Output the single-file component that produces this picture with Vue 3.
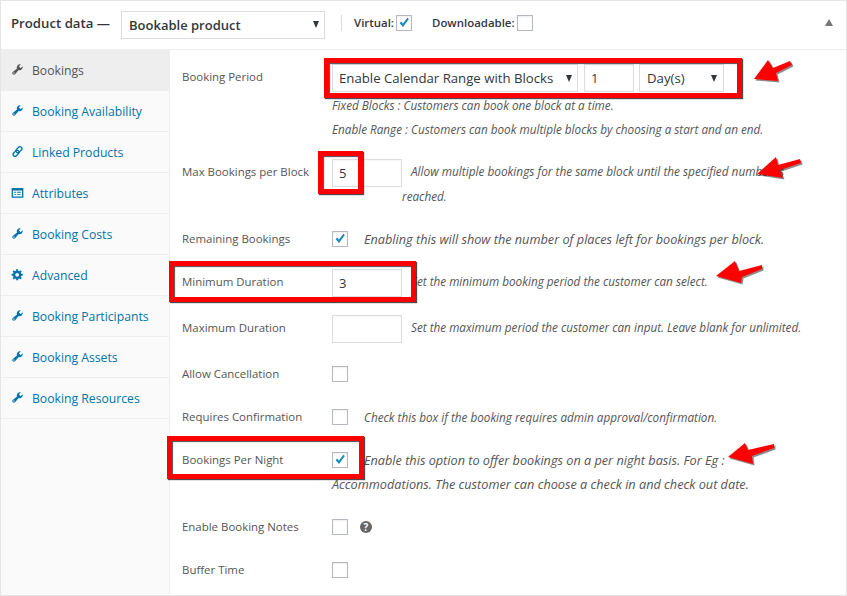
<script setup>
const wrench = 'M16.68 9.77c-1.34 1.34-3.3 1.67-4.95.99l-5.41 6.52c-.99.99-2.59.99-3.58 0s-.99-2.59 0-3.57l6.52-5.42c-.68-1.65-.35-3.61.99-4.95 1.28-1.28 3.12-1.62 4.72-1.06l-2.89 2.89 2.82 2.82 2.86-2.87c.53 1.58.18 3.39-1.08 4.67zM3.81 16.21c.4.39 1.04.39 1.43 0 .4-.4.4-1.04 0-1.43-.39-.4-1.03-.4-1.43 0-.39.39-.39 1.03 0 1.43z'
const gear = 'M18 12h-2.18c-.17.7-.44 1.35-.81 1.93l1.54 1.54-2.1 2.1-1.54-1.54c-.58.36-1.23.63-1.91.79V19H8v-2.18c-.68-.16-1.33-.43-1.91-.79l-1.54 1.54-2.12-2.12 1.54-1.54c-.36-.58-.63-1.23-.79-1.91H1V9.03h2.17c.16-.7.44-1.35.8-1.94L2.43 5.55l2.1-2.1 1.54 1.54c.58-.37 1.24-.64 1.93-.81V2h3v2.18c.68.16 1.33.43 1.91.79l1.54-1.54 2.12 2.12-1.54 1.54c.36.59.64 1.24.8 1.94H18V12zm-8.5 1.5c1.66 0 3-1.34 3-3s-1.34-3-3-3-3 1.34-3 3 1.34 3 3 3z'
const tabs = [
  { label: 'Bookings', icon: 'wrench', active: true },
  { label: 'Booking Availability', icon: 'wrench' },
  { label: 'Linked Products', icon: 'link' },
  { label: 'Attributes', icon: 'table' },
  { label: 'Booking Costs', icon: 'wrench' },
  { label: 'Advanced', icon: 'gear' },
  { label: 'Booking Participants', icon: 'wrench' },
  { label: 'Booking Assets', icon: 'wrench' },
  { label: 'Booking Resources', icon: 'wrench' },
]
const arrow = (x, y, p) => p.map(([a, b]) => `${x + a},${y + b}`).join(' ')
const arrows = [
  arrow(754, 79, [[0, 0], [14, -19], [19, -11], [36, -18], [38, -14], [22, -6], [24, 2]]),
  arrow(757, 174, [[0, 0], [19, -17], [21, -9], [43, -15], [44, -11], [23, -4], [26, 4]]),
  arrow(716, 276, [[0, 0], [19, -15], [23, -5], [46, -11], [46, -7], [26, 1], [25, 7]]),
  arrow(728, 457, [[0, 0], [17, -14], [20, -7], [46, -13], [46, -9], [24, -1], [25, 7]]),
]
const marks = [
  { key: 'period', cls: 'mark-period' },
  { key: 'max', cls: 'mark-max' },
  { key: 'min', cls: 'mark-min' },
  { key: 'night', cls: 'mark-night' },
]
</script>

<template>
  <div class="page">
    <header class="head">
      <strong class="title">Product data —</strong>
      <div class="select type-select"><span>Bookable product</span><i class="caret"></i></div>
      <span class="sep"></span>
      <span class="opt">Virtual:</span>
      <span class="box">
        <svg viewBox="0 0 16 16" class="tick"><path d="M3 8.2l1.8-1.8 2 2.2 5-6.6 1.8 1.5-6.7 9z" /></svg>
      </span>
      <span class="opt opt-dl">Downloadable:</span>
      <span class="box"></span>
      <i class="collapse"></i>
    </header>

    <div class="body">
      <nav class="tabs">
        <a v-for="t in tabs" :key="t.label" class="tab" :class="{ active: t.active }">
          <svg class="tab-icon" viewBox="0 0 20 20">
            <path v-if="t.icon === 'wrench'" :d="wrench" />
            <path v-else-if="t.icon === 'gear'" :d="gear" />
            <g v-else-if="t.icon === 'link'" class="link-icon">
              <rect x="9.2" y="2" width="6" height="10.5" rx="3" transform="rotate(45 12.2 7.2)" />
              <rect x="4.8" y="7.5" width="6" height="10.5" rx="3" transform="rotate(45 7.8 12.8)" />
            </g>
            <path v-else fill-rule="evenodd" d="M1 3h18v15H1zM3 7v9h14V7zM5 9h3v1.5H5zM9.5 9H15v1.5H9.5zM5 12.5h3V14H5zM9.5 12.5H15V14H9.5z" />
          </svg>
          <span>{{ t.label }}</span>
        </a>
      </nav>

      <main class="form">
        <div class="row">
          <label>Booking Period</label>
          <div class="field">
            <div class="controls">
              <div class="select period"><span>Enable Calendar Range with Blocks</span><i class="caret"></i></div>
              <div class="input qty">1</div>
              <div class="select unit"><span>Day(s)</span><i class="caret"></i></div>
            </div>
            <p class="desc">Fixed Blocks : Customers can book one block at a time.</p>
            <p class="desc">Enable Range : Customers can book multiple blocks by choosing a start and an end.</p>
          </div>
        </div>

        <div class="row">
          <label>Max Bookings per Block</label>
          <div class="field">
            <div class="input num">5</div>
            <p class="desc desc-side desc-allow">Allow multiple bookings for the same block until the specified number is</p>
            <p class="desc desc-wrap">reached.</p>
          </div>
        </div>

        <div class="row check-row">
          <label>Remaining Bookings</label>
          <div class="field">
            <span class="box in-row"><svg viewBox="0 0 16 16" class="tick"><path d="M3 8.2l1.8-1.8 2 2.2 5-6.6 1.8 1.5-6.7 9z" /></svg></span>
            <p class="desc desc-check desc-big">Enabling this will show the number of places left for bookings per block.</p>
          </div>
        </div>

        <div class="row">
          <label>Minimum Duration</label>
          <div class="field">
            <div class="input num">3</div>
            <p class="desc desc-side">Set the minimum booking period the customer can select.</p>
          </div>
        </div>

        <div class="row">
          <label>Maximum Duration</label>
          <div class="field">
            <div class="input num"></div>
            <p class="desc desc-side">Set the maximum period the customer can input. Leave blank for unlimited.</p>
          </div>
        </div>

        <div class="row check-row">
          <label>Allow Cancellation</label>
          <div class="field"><span class="box in-row"></span></div>
        </div>

        <div class="row check-row">
          <label>Requires Confirmation</label>
          <div class="field">
            <span class="box in-row"></span>
            <p class="desc desc-check">Check this box if the booking requires admin approval/confirmation.</p>
          </div>
        </div>

        <div class="row check-row">
          <label>Bookings Per Night</label>
          <div class="field">
            <span class="box in-row"><svg viewBox="0 0 16 16" class="tick"><path d="M3 8.2l1.8-1.8 2 2.2 5-6.6 1.8 1.5-6.7 9z" /></svg></span>
            <p class="desc desc-check desc-big">Enable this option to offer bookings on a per night basis. For Eg :</p>
            <p class="desc desc-full desc-big">Accommodations. The customer can choose a check in and check out date.</p>
          </div>
        </div>

        <div class="row check-row">
          <label>Enable Booking Notes</label>
          <div class="field">
            <span class="box in-row"></span>
            <span class="help">?</span>
          </div>
        </div>

        <div class="row check-row">
          <label>Buffer Time</label>
          <div class="field"><span class="box in-row"></span></div>
        </div>
      </main>
    </div>

    <div v-for="m in marks" :key="m.key" class="mark" :class="m.cls"></div>
    <svg class="arrows" viewBox="0 0 847 596">
      <polygon v-for="(a, i) in arrows" :key="'s' + i" :points="a" class="arrow-shadow" transform="translate(1.5 1.5)" />
      <polygon v-for="(a, i) in arrows" :key="'a' + i" :points="a" class="arrow" />
    </svg>
  </div>
</template>

<style scoped>
.page {
  position: relative;
  box-sizing: border-box;
  width: 847px;
  height: 596px;
  border: 1px solid #e5e5e5;
  background: #fff;
  overflow: hidden;
  font-family: "Open Sans", "Noto Sans", sans-serif;
  font-size: 11.45px;
  color: #555;
}
.head {
  display: flex;
  align-items: center;
  box-sizing: border-box;
  height: 49px;
  padding: 0 0 5px 10px;
  border-bottom: 1px solid #eee;
  color: #32373c;
}
.title {
  width: 110px;
  font-size: 13.2px;
  font-weight: 600;
  white-space: nowrap;
}
.select {
  display: flex;
  align-items: center;
  justify-content: space-between;
  box-sizing: border-box;
  height: 28px;
  padding: 0 5px 0 6px;
  border: 1px solid #ddd;
  background: #fff;
  color: #32373c;
}
.type-select {
  width: 204px;
  margin-top: 4px;
  padding-left: 7px;
  font-size: 13px;
  font-weight: 600;
}
.caret {
  width: 0;
  height: 0;
  border-left: 3.5px solid transparent;
  border-right: 3.5px solid transparent;
  border-top: 7px solid #32373c;
}
.sep {
  width: 1px;
  height: 16px;
  margin: 0 12px 0 16px;
  background: #ddd;
}
.opt {
  font-weight: 600;
  margin-right: 2px;
}
.opt-dl { margin-left: 20px; }
.box {
  display: inline-flex;
  flex: none;
  box-sizing: border-box;
  width: 16px;
  height: 16px;
  border: 1px solid #b4b9be;
  background: #fff;
  box-shadow: inset 0 1px 2px rgba(0, 0, 0, 0.07);
}
.tick {
  width: 14px;
  height: 14px;
  fill: #1e8cbe;
}
.collapse {
  margin-left: auto;
  margin-right: 13px;
  width: 0;
  height: 0;
  border-left: 4px solid transparent;
  border-right: 4px solid transparent;
  border-bottom: 7px solid #777;
}
.body {
  display: flex;
  height: 545px;
}
.tabs {
  flex: none;
  box-sizing: border-box;
  width: 169px;
  background: #fafafa;
  border-right: 1px solid #eee;
}
.tab {
  display: flex;
  align-items: center;
  box-sizing: border-box;
  height: 41px;
  padding: 0 0 0 10px;
  border-bottom: 1px solid #eee;
  color: #0073aa;
  font-size: 12.2px;
}
.tab.active {
  background: #eee;
  color: #555;
}
.tab-icon {
  flex: none;
  width: 13px;
  height: 13px;
  margin: -2px 8px 0 0;
  fill: currentColor;
}
.link-icon rect {
  fill: none;
  stroke: currentColor;
  stroke-width: 2;
}
.form {
  flex: 1;
  display: flex;
  flex-direction: column;
  gap: 18px;
  padding: 14px 0 0 12px;
}
.row {
  display: flex;
}
.check-row {
  margin-top: 1px;
}
.row label {
  flex: none;
  box-sizing: border-box;
  width: 150px;
  height: 24px;
  padding-top: 1px;
  line-height: 24px;
}
.check-row label { padding-top: 0; }
.field {
  display: flex;
  flex-wrap: wrap;
  align-content: flex-start;
  align-items: center;
  width: 490px;
}
.controls {
  display: flex;
  gap: 5px;
  width: 100%;
  height: 29px;
}
.input {
  display: flex;
  align-items: center;
  box-sizing: border-box;
  height: 28px;
  padding: 0 6px;
  border: 1px solid #ddd;
  background: #fff;
  color: #32373c;
  font-size: 13px;
  box-shadow: inset 0 1px 2px rgba(0, 0, 0, 0.04);
}
.period {
  width: 246px;
  margin-right: 1px;
  font-size: 13.2px;
}
.qty { width: 50px; }
.unit {
  width: 85px;
  padding-left: 7px;
  padding-right: 6px;
  font-size: 13.2px;
}
.num { width: 70px; }
.desc {
  margin: 0;
  font-style: italic;
  line-height: 24px;
  font-size: 11.72px;
  white-space: nowrap;
}
.field > .desc { width: 100%; }
.field > .desc-big { font-size: 12.7px; }
.field > .desc-side {
  width: auto;
  margin-left: 9px;
  height: 28px;
  line-height: 25px;
}
.field > .desc-allow { font-size: 11.82px; }
.field > .desc-wrap {
  margin-top: -3px;
  margin-left: 70px;
}
.in-row {
  margin: 4px 0;
}
.field > .desc-check {
  width: auto;
  margin-left: 16px;
}
.help {
  display: inline-flex;
  align-items: center;
  justify-content: center;
  width: 12px;
  height: 12px;
  margin-left: 12px;
  border-radius: 50%;
  background: #666;
  color: #fff;
  font-size: 10px;
  font-weight: 700;
}
.mark {
  position: absolute;
  box-sizing: border-box;
  border: 5px solid #f00;
  box-shadow: 1px 1px 1px rgba(0, 0, 0, 0.7), inset 1px 1px 1px rgba(0, 0, 0, 0.7);
}
.mark-period { left: 323px; top: 57px; width: 418px; height: 40px; }
.mark-max { left: 317px; top: 150px; width: 45px; height: 43px; }
.mark-min { left: 168px; top: 260px; width: 247px; height: 41px; }
.mark-night { left: 166px; top: 435px; width: 197px; height: 43px; }
.arrows {
  position: absolute;
  left: -1px;
  top: -1px;
  width: 847px;
  height: 596px;
  pointer-events: none;
}
.arrow { fill: #f00; }
.arrow-shadow { fill: rgba(0, 0, 0, 0.45); }
</style>
